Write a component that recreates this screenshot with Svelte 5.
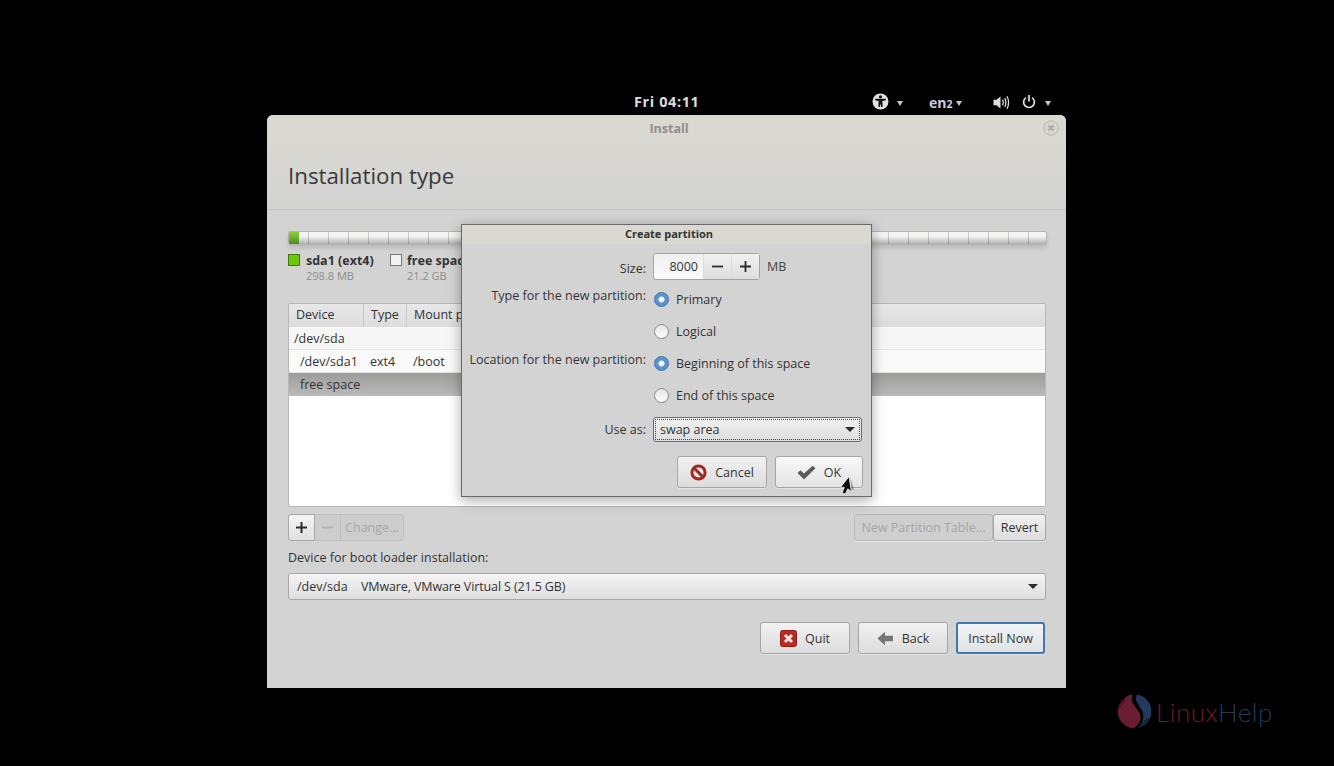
<script lang="ts">
  const radios = [
    { label: 'Type for the new partition:', text: 'Primary', on: true },
    { label: '', text: 'Logical', on: false },
    { label: 'Location for the new partition:', text: 'Beginning of this space', on: true },
    { label: '', text: 'End of this space', on: false },
  ];
</script>

<div class="screen">
  <div class="panel">
    <span class="clock">Fri 04:11</span>
    <div class="indicators">
      <svg class="ind-a11y" width="17" height="17" viewBox="0 0 17 17">
        <circle cx="8.5" cy="8.5" r="8" fill="#e2e2e2" />
        <circle cx="8.5" cy="3.8" r="1.6" fill="#111" />
        <path d="M3.2 5.8 L13.8 5.8 L13.8 7.2 L10.4 8 L10.6 14 L9.2 14 L8.5 10.6 L7.8 14 L6.4 14 L6.6 8 L3.2 7.2 Z" fill="#111" />
      </svg>
      <span class="caret c1"></span>
      <span class="lang">en<small>2</small></span>
      <span class="caret c2"></span>
      <svg class="ind-vol" width="17" height="15" viewBox="0 0 17 15">
        <path d="M0.5 4.8 H3.5 L7.5 1.5 V13.5 L3.5 10.2 H0.5 Z" fill="#ddd" />
        <path d="M9.5 4.6 Q11 7.5 9.5 10.4 M11.8 3 Q14 7.5 11.8 12 M14 1.2 Q17.2 7.5 14 13.8" fill="none" stroke="#ddd" stroke-width="1.3" />
      </svg>
      <svg class="ind-power" width="14" height="15" viewBox="0 0 14 15">
        <path d="M4 3.6 A5.4 5.4 0 1 0 10 3.6" fill="none" stroke="#e2e2e2" stroke-width="1.7" />
        <path d="M7 1 V7.4" stroke="#e2e2e2" stroke-width="1.7" />
      </svg>
      <span class="caret c3"></span>
    </div>
  </div>

  <div class="window">
    <div class="titlebar">
      <span>Install</span>
      <svg class="close" width="16" height="16" viewBox="0 0 16 16">
        <circle cx="8" cy="8" r="7.3" fill="#d6d5ce" stroke="#b9b9b4" />
        <path d="M5.5 5.5 L10.5 10.5 M10.5 5.5 L5.5 10.5" stroke="#aeaeaa" stroke-width="2.2" />
      </svg>
    </div>
    <div class="header"><h1>Installation type</h1></div>

    <div class="body">
      <div class="bar"><div class="bar-used"></div></div>

      <div class="legend">
        <div class="legend-item w-sda">
          <span class="swatch green"></span>
          <div><b>sda1 (ext4)</b><em>298.8 MB</em></div>
        </div>
        <div class="legend-item">
          <span class="swatch"></span>
          <div><b>free space</b><em>21.2 GB</em></div>
        </div>
      </div>

      <div class="table">
        <div class="thead">
          <span class="th col-dev">Device</span>
          <span class="th col-type">Type</span>
          <span class="th col-mount">Mount point</span>
        </div>
        <div class="row disk">/dev/sda</div>
        <div class="row part">
          <span class="td-dev">/dev/sda1</span>
          <span class="td-type">ext4</span>
          <span>/boot</span>
        </div>
        <div class="row selected">free space</div>
      </div>

      <div class="toolbar">
        <div class="linked">
          <button class="seg plus">
            <svg width="13" height="13" viewBox="0 0 13 13"><path d="M6.5 1 V12 M1 6.5 H12" stroke="#2b2b2b" stroke-width="2" /></svg>
          </button>
          <button class="seg off minus">
            <svg width="13" height="13" viewBox="0 0 13 13"><path d="M1 6.5 H12" stroke="#b4b4b1" stroke-width="2" /></svg>
          </button>
          <button class="seg off change">Change...</button>
        </div>
        <div class="toolbar-right">
          <button class="btn off table-btn">New Partition Table...</button>
          <button class="btn revert">Revert</button>
        </div>
      </div>

      <div class="boot-label">Device for boot loader installation:</div>
      <div class="boot-combo">
        <span class="boot-dev">/dev/sda</span>
        <span class="boot-name">VMware, VMware Virtual S (21.5 GB)</span>
        <span class="arrow"></span>
      </div>

      <div class="actions">
        <button class="btn action">
          <svg width="17" height="17" viewBox="0 0 17 17">
            <rect x="0.5" y="0.5" width="16" height="16" rx="2" fill="#b92a22" stroke="#8e1d17" />
            <path d="M5 5 L12 12 M12 5 L5 12" stroke="#f4e8e6" stroke-width="3" />
          </svg>
          Quit
        </button>
        <button class="btn action">
          <svg width="17" height="15" viewBox="0 0 17 15">
            <path d="M0.5 7.5 L8 0.8 V4.8 H16 V10.2 H8 V14.2 Z" fill="#757575" />
          </svg>
          Back
        </button>
        <button class="btn action default">Install Now</button>
      </div>
    </div>

    <div class="dialog">
      <div class="dialog-title">Create partition</div>
      <div class="form">
        <span class="f-label size-label">Size:</span>
        <div class="size-row">
          <div class="spin">
            <span class="spin-value">8000</span>
            <span class="spin-btn">
              <svg width="11" height="11" viewBox="0 0 11 11"><path d="M0 5.5 H11" stroke="#2b2b2b" stroke-width="1.8" /></svg>
            </span>
            <span class="spin-btn">
              <svg width="11" height="11" viewBox="0 0 11 11"><path d="M5.5 0 V11 M0 5.5 H11" stroke="#2b2b2b" stroke-width="1.8" /></svg>
            </span>
          </div>
          <span class="unit">MB</span>
        </div>

        {#each radios as r}
          <span class="f-label radio-label">{r.label}</span>
          <div class="radio-row">
            <span class="radio" class:on={r.on}></span>
            <span>{r.text}</span>
          </div>
        {/each}

        <span class="f-label use-label">Use as:</span>
        <div class="use-combo">
          <span>swap area</span>
          <span class="arrow"></span>
        </div>
      </div>
      <div class="dialog-actions">
        <button class="btn dlg cancel">
          <svg width="17" height="17" viewBox="0 0 17 17">
            <circle cx="8.5" cy="8.5" r="6.6" fill="none" stroke="#a5281f" stroke-width="3" />
            <path d="M4 4 L13 13" stroke="#a5281f" stroke-width="3" />
          </svg>
          Cancel
        </button>
        <button class="btn dlg ok">
          <svg width="19" height="15" viewBox="0 0 19 15">
            <path d="M0.5 8 L3.4 5.2 L7 8.6 L15.6 0.8 L18.5 3.2 L7 14.4 Z" fill="#5c5c5c" />
          </svg>
          OK
        </button>
      </div>
    </div>
  </div>

  <svg class="cursor" width="15" height="19" viewBox="0 0 15 19">
    <path d="M10.6 2 L14 13 L11 15 Z" fill="#000" fill-opacity="0.3" />
    <path d="M9 0.5 L0.6 11.4 L4.4 11.4 L2.2 16.6 L5.2 18.2 L7.8 12.8 L11.4 15.6 Z" fill="#0c0c0c" stroke="#eee" stroke-width="0.8" />
  </svg>

  <div class="logo">
    <svg width="36" height="35" viewBox="0 0 36 35">
      <path d="M16 0.6 A17 17 0 0 0 16 34.4 C22 31 26 25 22 18 C18 12 12 7 16 0.6 Z" fill="#6a1c33" />
      <path d="M20 0.6 A17 17 0 0 1 21 34 C27 28 28 21 24 15 C21 10 17 6 20 0.6 Z" fill="#243a5c" />
      <path d="M3 10 L9 3 M2 14 L8 6 M25 32 L32 24 M22 33 L30 25" stroke="#000" stroke-width="0.6" />
    </svg>
    <span class="logo-text"><span class="lx">Linux</span><span class="hp">Help</span></span>
  </div>
</div>

<style>
  :global(body) {
    margin: 0;
    background: #000;
  }
  .screen {
    position: relative;
    width: 1334px;
    height: 766px;
    background: #000;
    overflow: hidden;
    font-family: "Open Sans", "Noto Sans", sans-serif;
    font-size: 12.5px;
    color: #333;
  }
  button {
    font: inherit;
    color: inherit;
    padding: 0;
  }

  /* top panel */
  .panel {
    position: absolute;
    left: 267px;
    top: 90px;
    width: 799px;
    height: 25px;
  }
  .clock {
    position: absolute;
    left: 367px;
    top: 2px;
    color: #ddd;
    font-weight: 700;
    font-size: 14.5px;
    letter-spacing: 0.6px;
  }
  .indicators {
    position: absolute;
    inset: 0;
  }
  .indicators > * {
    position: absolute;
  }
  .ind-a11y { left: 605px; top: 3px; }
  .ind-vol { left: 726px; top: 5px; }
  .ind-power { left: 755px; top: 4px; }
  .lang {
    left: 662px;
    top: 3px;
    color: #ccd;
    font-weight: 700;
    font-size: 14px;
  }
  .lang small { font-size: 10.5px; }
  .caret {
    width: 0;
    height: 0;
    border: 3.5px solid transparent;
    border-top: 5px solid #c8c8c8;
    border-bottom: 0;
    top: 11px;
  }
  .c1 { left: 630px; }
  .c2 { left: 689px; }
  .c3 { left: 778px; }

  /* main window */
  .window {
    position: absolute;
    left: 267px;
    top: 115px;
    width: 799px;
    height: 573px;
    border-radius: 6px 6px 0 0;
    background: #d3d3d3;
  }
  .titlebar {
    position: relative;
    height: 27px;
    box-sizing: border-box;
    padding-left: 5px;
    background: #d9d8d1;
    border-radius: 6px 6px 0 0;
    display: flex;
    align-items: center;
    justify-content: center;
    font-weight: 700;
    font-size: 12.5px;
    color: #8f8f8b;
  }
  .close {
    position: absolute;
    right: 7px;
    top: 5px;
  }
  .header {
    height: 68px;
    box-sizing: border-box;
    border-bottom: 1px solid #c2c2c2;
    background: linear-gradient(#d9d8d2, #d3d3d3);
    padding: 18px 21px 0;
  }
  h1 {
    margin: 0;
    font-weight: 400;
    font-size: 22.3px;
    line-height: 32px;
    color: #3a3a3a;
  }
  .body {
    padding: 21px 20px 0 21px;
  }

  /* partition bar */
  .bar {
    height: 14px;
    margin-right: -1px;
    border-radius: 2px;
    box-sizing: border-box;
    border: 1px solid #b4b4b4;
    background:
      linear-gradient(rgba(255, 255, 255, 0.2), rgba(0, 0, 0, 0) 40%, rgba(0, 0, 0, 0.28)),
      repeating-linear-gradient(90deg, #f2f2f0 0 19px, #c4c4c4 19px 20px);
    box-shadow: 0 3px 4px rgba(0, 0, 0, 0.12);
    overflow: hidden;
  }
  .bar-used {
    width: 10px;
    height: 100%;
    background: linear-gradient(#8ccd3a, #6aa92a 60%, #4f8420);
  }
  .legend {
    display: flex;
    margin-top: 7px;
    height: 51px;
  }
  .legend-item {
    display: flex;
    gap: 6px;
  }
  .legend-item + .legend-item {
    gap: 5px;
  }
  .w-sda { width: 102px; }
  .swatch {
    width: 10px;
    height: 10px;
    margin-top: 2px;
    border: 1px solid #777;
    background: #f2f2f2;
  }
  .swatch.green {
    background: #6fc40e;
    border-color: #3d7d10;
  }
  .legend-item b {
    display: block;
    font-size: 12.5px;
    line-height: 17px;
    color: #333;
  }
  .legend-item em {
    display: block;
    font-style: normal;
    font-size: 11px;
    line-height: 13px;
    color: #8d8d8d;
  }

  /* partition table */
  .table {
    height: 204px;
    box-sizing: border-box;
    background: #fff;
    border: 1px solid #b7b7b7;
    border-radius: 2px;
  }
  .thead {
    display: flex;
    height: 23px;
    background: linear-gradient(#e8e8e8, #dcdcdc);
  }
  .th {
    box-sizing: border-box;
    padding: 2px 0 0 7px;
    border-right: 1px solid #c8c8c8;
  }
  .col-dev { width: 75px; }
  .col-type { width: 43px; }
  .col-mount { flex: 1; border-right: 0; }
  .row {
    display: flex;
    align-items: center;
    height: 23px;
    box-sizing: border-box;
    border-bottom: 1px solid #e4e4e4;
  }
  .disk { padding-left: 5px; background: #f6f6f6; }
  .part { padding-left: 11px; background: #fafafa; }
  .td-dev { width: 70px; }
  .td-type { width: 43px; }
  .selected {
    padding-left: 11px;
    background: linear-gradient(#9c9c9a, #bababa);
    border-bottom: 0;
  }

  /* buttons */
  .btn {
    display: inline-flex;
    align-items: center;
    justify-content: center;
    box-sizing: border-box;
    border: 1px solid #a6a6a6;
    border-radius: 3px;
    background: linear-gradient(#f2f2f2, #dcdcdc);
    box-shadow: 0 1px 0 rgba(255, 255, 255, 0.35);
  }
  .btn.off {
    background: #cfcfcf;
    border-color: #b8b8b8;
    color: #a6a6a6;
  }
  .toolbar {
    display: flex;
    justify-content: space-between;
    margin-top: 7px;
    height: 27px;
  }
  .linked {
    display: flex;
  }
  .seg {
    height: 27px;
    box-sizing: border-box;
    border: 1px solid #a8a8a8;
    display: flex;
    align-items: center;
    justify-content: center;
  }
  .plus {
    width: 27px;
    border-radius: 3px 0 0 3px;
    background: linear-gradient(#f5f5f5, #e0e0e0);
  }
  .seg.off {
    background: #cdcdcd;
    border-color: #bfbfbf;
    border-left: 0;
    color: #a8a8a8;
  }
  .minus { width: 26px; }
  .change {
    width: 63px;
    border-radius: 0 3px 3px 0;
  }
  .toolbar-right {
    display: flex;
  }
  .table-btn { width: 139px; height: 27px; }
  .revert { width: 53px; height: 27px; }
  .boot-label {
    margin-top: 8px;
    line-height: 17px;
  }
  .boot-combo {
    display: flex;
    align-items: center;
    box-sizing: border-box;
    height: 27px;
    margin-top: 7px;
    padding: 0 7px 0 8px;
    border: 1px solid #a8a8a8;
    border-radius: 3px;
    background: linear-gradient(#f4f4f4, #dedede);
  }
  .boot-dev { width: 64px; }
  .boot-name {
    flex: 1;
    letter-spacing: -0.12px;
  }
  .arrow {
    width: 0;
    height: 0;
    border: 5px solid transparent;
    border-top: 5px solid #2b2b2b;
    border-bottom: 0;
  }
  .actions {
    display: flex;
    justify-content: flex-end;
    gap: 8px;
    margin-top: 22px;
    margin-right: 1px;
  }
  .action {
    width: 90px;
    height: 32px;
    gap: 8px;
  }
  .default {
    width: 89px;
    border: 2px solid #3f77b0;
    background: linear-gradient(#f2f4f6, #dfe3e6);
  }

  /* create partition dialog */
  .dialog {
    position: absolute;
    left: 194px;
    top: 109px;
    width: 411px;
    height: 273px;
    box-sizing: border-box;
    border: 1px solid #6a6a6a;
    background: #d3d3d3;
    box-shadow: 0 3px 12px rgba(0, 0, 0, 0.35);
  }
  .dialog-title {
    height: 19px;
    box-sizing: border-box;
    padding-left: 5px;
    background: #d9d8d1;
    text-align: center;
    font-weight: 700;
    font-size: 11px;
    line-height: 18px;
    color: #333;
  }
  .form {
    display: grid;
    grid-template-columns: 184px 1fr;
    column-gap: 7px;
    padding: 9px 9px 0 0;
  }
  .f-label {
    text-align: right;
    line-height: 17px;
  }
  .size-label { align-self: center; }
  .size-row {
    display: flex;
    align-items: center;
    gap: 7px;
    height: 27px;
    margin-bottom: 3px;
  }
  .spin {
    display: flex;
    width: 107px;
    height: 27px;
    box-sizing: border-box;
    border: 1px solid #a4a4a4;
    border-radius: 3px;
    background: linear-gradient(#f0f0f0, #fafafa);
  }
  .spin-value {
    flex: 1;
    text-align: right;
    line-height: 25px;
    padding-right: 5px;
  }
  .spin-btn {
    width: 27px;
    display: flex;
    align-items: center;
    justify-content: center;
    border-left: 1px solid #dcdcdc;
    background: linear-gradient(#f0f0f0, #dedede);
  }
  .unit { color: #444; }
  .radio-label { padding-top: 4px; }
  .radio-row {
    display: flex;
    align-items: center;
    gap: 7px;
    height: 32px;
    padding-left: 1px;
  }
  .radio {
    width: 15px;
    height: 15px;
    box-sizing: border-box;
    border-radius: 50%;
    border: 1px solid #8a8a8a;
    background: linear-gradient(#e6e6e6, #fbfbfb);
  }
  .radio.on {
    border: 1px solid #3f6fa8;
    background: radial-gradient(circle, #f4f7fb 0 2.5px, #5c92cc 3.5px);
  }
  .use-label {
    align-self: center;
    margin-top: 6px;
  }
  .use-combo {
    display: flex;
    justify-content: space-between;
    align-items: center;
    box-sizing: border-box;
    height: 25px;
    margin-top: 6px;
    padding: 0 6px;
    border: 1px solid #3f77b0;
    border-radius: 3px;
    background: linear-gradient(#f2f2f2, #dedede);
    outline: 1px dotted #444;
    outline-offset: -3px;
  }
  .dialog-actions {
    display: flex;
    justify-content: flex-end;
    gap: 8px;
    margin-top: 14px;
    padding-right: 8px;
  }
  .dlg {
    height: 32px;
    gap: 8px;
  }
  .cancel { width: 90px; }
  .ok { width: 88px; background: linear-gradient(#f8f8f8, #e4e4e4); }

  .cursor {
    position: absolute;
    left: 840px;
    top: 476px;
  }

  /* watermark */
  .logo {
    position: absolute;
    left: 1117px;
    top: 694px;
    display: flex;
    align-items: center;
    gap: 3px;
  }
  .logo-text {
    font-family: Lato, sans-serif;
    font-size: 26px;
    font-weight: 300;
    letter-spacing: 0.5px;
  }
  .lx { color: #6a1c33; }
  .hp { color: #243a5c; }
</style>
